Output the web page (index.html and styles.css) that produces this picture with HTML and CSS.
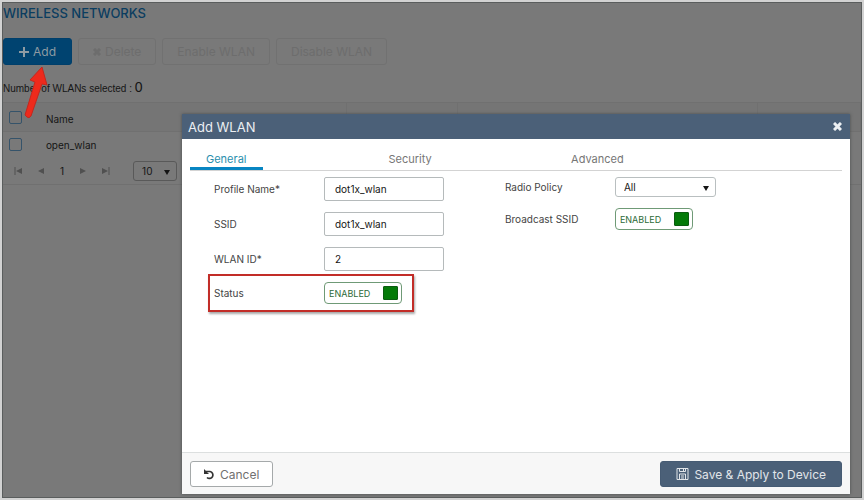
FILE: index.html
```html
<!DOCTYPE html>
<html lang="en">
<head>
    <meta charset="UTF-8">
    <meta name="viewport" content="width=device-width, initial-scale=1.0">
    <title>Wireless Networks</title>
    <link rel="stylesheet" href="styles.css">
</head>
<body>
    <main class="page">
        <h1>WIRELESS NETWORKS</h1>

        <div class="toolbar">
            <button type="button" class="btn-add">
                <svg width="10" height="10" viewBox="0 0 10 10"><path d="M5 0v10M0 5h10" stroke="currentColor" stroke-width="2"/></svg>
                Add
            </button>
            <button type="button" disabled>
                <svg width="8" height="8" viewBox="0 0 8 8"><path d="M1 1l6 6M7 1L1 7" stroke="currentColor" stroke-width="3"/></svg>
                Delete
            </button>
            <button type="button" disabled>Enable WLAN</button>
            <button type="button" disabled>Disable WLAN</button>
        </div>

        <p class="count">Number of WLANs selected : <span>0</span></p>

        <table>
            <thead>
                <tr>
                    <th class="col-check"><input type="checkbox" aria-label="Select all"></th>
                    <th class="col-name">Name</th>
                    <th class="col-small"></th>
                    <th class="col-large"></th>
                    <th></th>
                </tr>
            </thead>
            <tbody>
                <tr>
                    <td><input type="checkbox" aria-label="Select open_wlan"></td>
                    <td>open_wlan</td>
                    <td></td>
                    <td></td>
                    <td></td>
                </tr>
            </tbody>
        </table>

        <div class="pager">
            <button type="button" aria-label="First page"><svg width="8" height="8" viewBox="0 0 8 8"><path d="M1 0v8" stroke="currentColor"/><path d="M8 1v6L2 4z" fill="currentColor"/></svg></button>
            <button type="button" aria-label="Previous page"><svg width="8" height="8" viewBox="0 0 8 8"><path d="M7 1v6L1 4z" fill="currentColor"/></svg></button>
            <span>1</span>
            <button type="button" aria-label="Next page"><svg width="8" height="8" viewBox="0 0 8 8"><path d="M1 1v6l6-3z" fill="currentColor"/></svg></button>
            <button type="button" aria-label="Last page"><svg width="8" height="8" viewBox="0 0 8 8"><path d="M7 0v8" stroke="currentColor"/><path d="M0 1v6l6-3z" fill="currentColor"/></svg></button>
            <div class="select page-size">
                <select aria-label="Items per page"><option>10</option><option>20</option></select>
                <svg width="6" height="6" viewBox="0 0 6 6"><path d="M0 1h6L3 6z" fill="currentColor"/></svg>
            </div>
        </div>

        <!-- Arrow pointing at the Add button -->
        <svg class="arrow" width="28" height="54" viewBox="0 0 28 54">
            <path d="M20 1l5 18-5-1-11 32q-2 3-4 1l-2-2 10-33-5-2z" fill="#ee2a1c" stroke="#c3281f" stroke-width="1" stroke-linejoin="round"/>
        </svg>

        <!-- Add WLAN dialog -->
        <form class="dialog" role="dialog" aria-labelledby="dialog-title">
            <header>
                <h2 id="dialog-title">Add WLAN</h2>
                <button type="button" class="close" aria-label="Close">
                    <svg width="9" height="9" viewBox="0 0 9 9"><path d="M1 1l7 7M8 1L1 8" stroke="currentColor" stroke-width="3"/></svg>
                </button>
            </header>

            <nav class="tabs">
                <a href="#general" class="active">General</a>
                <a href="#security">Security</a>
                <a href="#advanced">Advanced</a>
            </nav>

            <div class="fields" id="general">
                <div class="column">
                    <div class="field">
                        <label for="profile">Profile Name*</label>
                        <input type="text" id="profile" value="dot1x_wlan">
                    </div>
                    <div class="field">
                        <label for="ssid">SSID</label>
                        <input type="text" id="ssid" value="dot1x_wlan">
                    </div>
                    <div class="field">
                        <label for="wlan-id">WLAN ID*</label>
                        <input type="text" id="wlan-id" value="2">
                    </div>
                    <div class="field highlight">
                        <label for="status">Status</label>
                        <div class="toggle"><span>ENABLED</span><input type="checkbox" id="status" checked></div>
                    </div>
                </div>
                <div class="column">
                    <div class="field">
                        <label for="radio">Radio Policy</label>
                        <div class="select">
                            <select id="radio"><option>All</option></select>
                            <svg width="6" height="6" viewBox="0 0 6 6"><path d="M0 1h6L3 6z" fill="currentColor"/></svg>
                        </div>
                    </div>
                    <div class="field">
                        <label for="broadcast">Broadcast SSID</label>
                        <div class="toggle"><span>ENABLED</span><input type="checkbox" id="broadcast" checked></div>
                    </div>
                </div>
            </div>

            <footer>
                <button type="button" class="btn-cancel">
                    <svg width="11" height="11" viewBox="0 0 11 11"><path d="M1.500 2.500h4.500a3.500 3.500 0 1 1-3 6" fill="none" stroke="#333" stroke-width="1.7"/><path d="M0 0v5h5z" fill="#333"/></svg>
                    Cancel
                </button>
                <button type="button" class="btn-save">
                    <svg width="13" height="14" viewBox="0 0 13 14" fill="none" stroke="currentColor"><path d="M1 1.500h11v11H1z"/><path d="M3.500 1.500v3h6v-3M7.500 2v2M3.500 7h6v5.500h-6zM5 9h3M5 11h3"/></svg>
                    Save &amp; Apply to Device
                </button>
            </footer>
        </form>
    </main>
</body>
</html>
```

FILE: styles.css
```css
* {
    box-sizing: border-box;
}

body {
    margin: 0;
    padding: 2px;
    background: #d2d2d2;
    font-family: Inter, "Liberation Sans", sans-serif;
    font-size: 10px;
    color: #151515;
}

button, input, select {
    font: inherit;
    color: inherit;
}

.page {
    position: relative;
    min-height: calc(100vh - 4px);
    border: 1px solid #5a5d5d;
    background: #797979;
}

h1 {
    margin: 0;
    padding-top: 2px;
    font-size: 13px;
    font-weight: 500;
    line-height: 16px;
    color: #0b3d60;
}

/* Toolbar */
.toolbar {
    display: flex;
    gap: 6px;
    margin-top: 17px;
}

.toolbar button {
    display: flex;
    align-items: center;
    justify-content: center;
    gap: 4px;
    height: 27px;
    padding: 0 14px;
    border: 1px solid #717171;
    border-radius: 3px;
    background: transparent;
    font-size: 12px;
    color: #6d6d6d;
}

.toolbar .btn-add {
    padding: 0 15px;
    border-color: #003f6b;
    background: #004370;
    color: #8e9ba3;
}

.count {
    margin: 0;
    padding: 13px 0 4px;
    font-family: "Liberation Sans", Arial, sans-serif;
    line-height: 18px;
}

.count span {
    font-size: 14px;
}

/* WLAN table */
table {
    width: 100%;
    border-collapse: collapse;
    table-layout: fixed;
}

th, td {
    height: 26px;
    padding: 0;
    font-weight: normal;
    text-align: left;
}

th {
    height: 29px;
    padding-top: 4px;
    border: 1px solid #707070;
    border-left: none;
    background: #757575;
}

.col-check {
    width: 5%;
    padding-top: 0;
    border-right: none;
}

.col-name {
    width: 35%;
}

.col-small {
    width: 13%;
}

.col-large {
    width: 35%;
}

table input {
    display: block;
    appearance: none;
    width: 13px;
    height: 13px;
    margin: 0 0 0 6px;
    border: 1px solid #35536a;
    border-radius: 2px;
}

.pager {
    display: flex;
    align-items: center;
    gap: 15px;
    height: 27px;
    padding-left: 11px;
    border-bottom: 1px solid #707070;
}

.pager button {
    display: flex;
    padding: 0;
    border: none;
    background: none;
    color: #505050;
}

.arrow {
    position: absolute;
    top: 63px;
    left: 19px;
}

/* Select box with its own arrow */
.select {
    position: relative;
    width: 101px;
    height: 20px;
}

.select select {
    appearance: none;
    width: 100%;
    height: 100%;
    padding: 0 8px;
    border: 1px solid #b9bfc0;
    border-radius: 3px;
    background: transparent;
}

.select svg {
    position: absolute;
    top: 8px;
    right: 7px;
    pointer-events: none;
}

.page-size {
    width: 44px;
    margin-left: 8px;
}

.page-size select {
    border-color: #595959;
}

/* Dialog */
.dialog {
    position: absolute;
    top: 111px;
    left: 179px;
    right: 11px;
    background: #fff;
    box-shadow: 0 0 3px #4a4d4d;
}

.dialog header {
    display: flex;
    align-items: center;
    justify-content: space-between;
    height: 25px;
    padding: 0 8px 0 6px;
    background: #4b6078;
    color: #eceff2;
}

.dialog h2 {
    margin: 0;
    font-size: 13px;
    font-weight: normal;
}

.close {
    display: flex;
    padding: 0;
    border: none;
    background: none;
}

.tabs {
    display: grid;
    grid-template-columns: 28% 28% 1fr;
    margin: 0 8px;
    padding-top: 10px;
    border-bottom: 1px solid #d3d3d3;
}

.tabs a {
    justify-self: start;
    padding: 3px 16px 1px;
    border-bottom: 3px solid transparent;
    font-size: 11px;
    line-height: 14px;
    color: #767676;
    text-decoration: none;
}

.tabs .active {
    border-color: #0785c2;
    color: #2a8fae;
}

.fields {
    display: grid;
    grid-template-columns: 6fr 7fr;
    gap: 2px;
    min-height: 281px;
    padding: 6px 8px 0 32px;
}

.column {
    display: flex;
    flex-direction: column;
    gap: 11px;
}

.field {
    display: flex;
    align-items: center;
    position: relative;
}

.field label {
    width: 110px;
    color: #444;
}

.field input[type="text"] {
    width: 120px;
    height: 24px;
    padding: 0 10px;
    border: 1px solid #b5babb;
    border-radius: 2px;
    background: #fff;
}

.toggle {
    display: flex;
    align-items: center;
    justify-content: space-between;
    width: 78px;
    height: 22px;
    padding: 0 3px 0 4px;
    border: 1px solid #6f9a76;
    border-radius: 4px;
    font-size: 9px;
    color: #2d6b38;
}

.toggle input {
    appearance: none;
    width: 15px;
    height: 14px;
    margin: 0;
    border: 1px solid #0b5c10;
    border-radius: 1px;
    background: #ddd;
}

.toggle input:checked {
    background: #047a08;
}

.highlight::before {
    content: "";
    position: absolute;
    inset: -8px auto -8px -6px;
    width: 202px;
    border: 2px solid #c22d28;
    box-shadow: 1px 2px 2px #aaa;
    pointer-events: none;
}

.dialog footer {
    display: flex;
    justify-content: space-between;
    padding: 8px 8px 7px;
    border-top: 1px solid #dcdfdf;
    background: #f7f7f7;
}

.dialog footer button {
    display: flex;
    align-items: center;
    gap: 5px;
    height: 26px;
    padding: 0 13px;
    border: 1px solid #a5a9aa;
    border-radius: 3px;
    background: #fff;
    font-size: 12px;
    color: #707070;
}

.dialog footer .btn-save {
    padding: 0 15px;
    border-color: #465b73;
    background: #4b6078;
    color: #e2e6ea;
}
```
